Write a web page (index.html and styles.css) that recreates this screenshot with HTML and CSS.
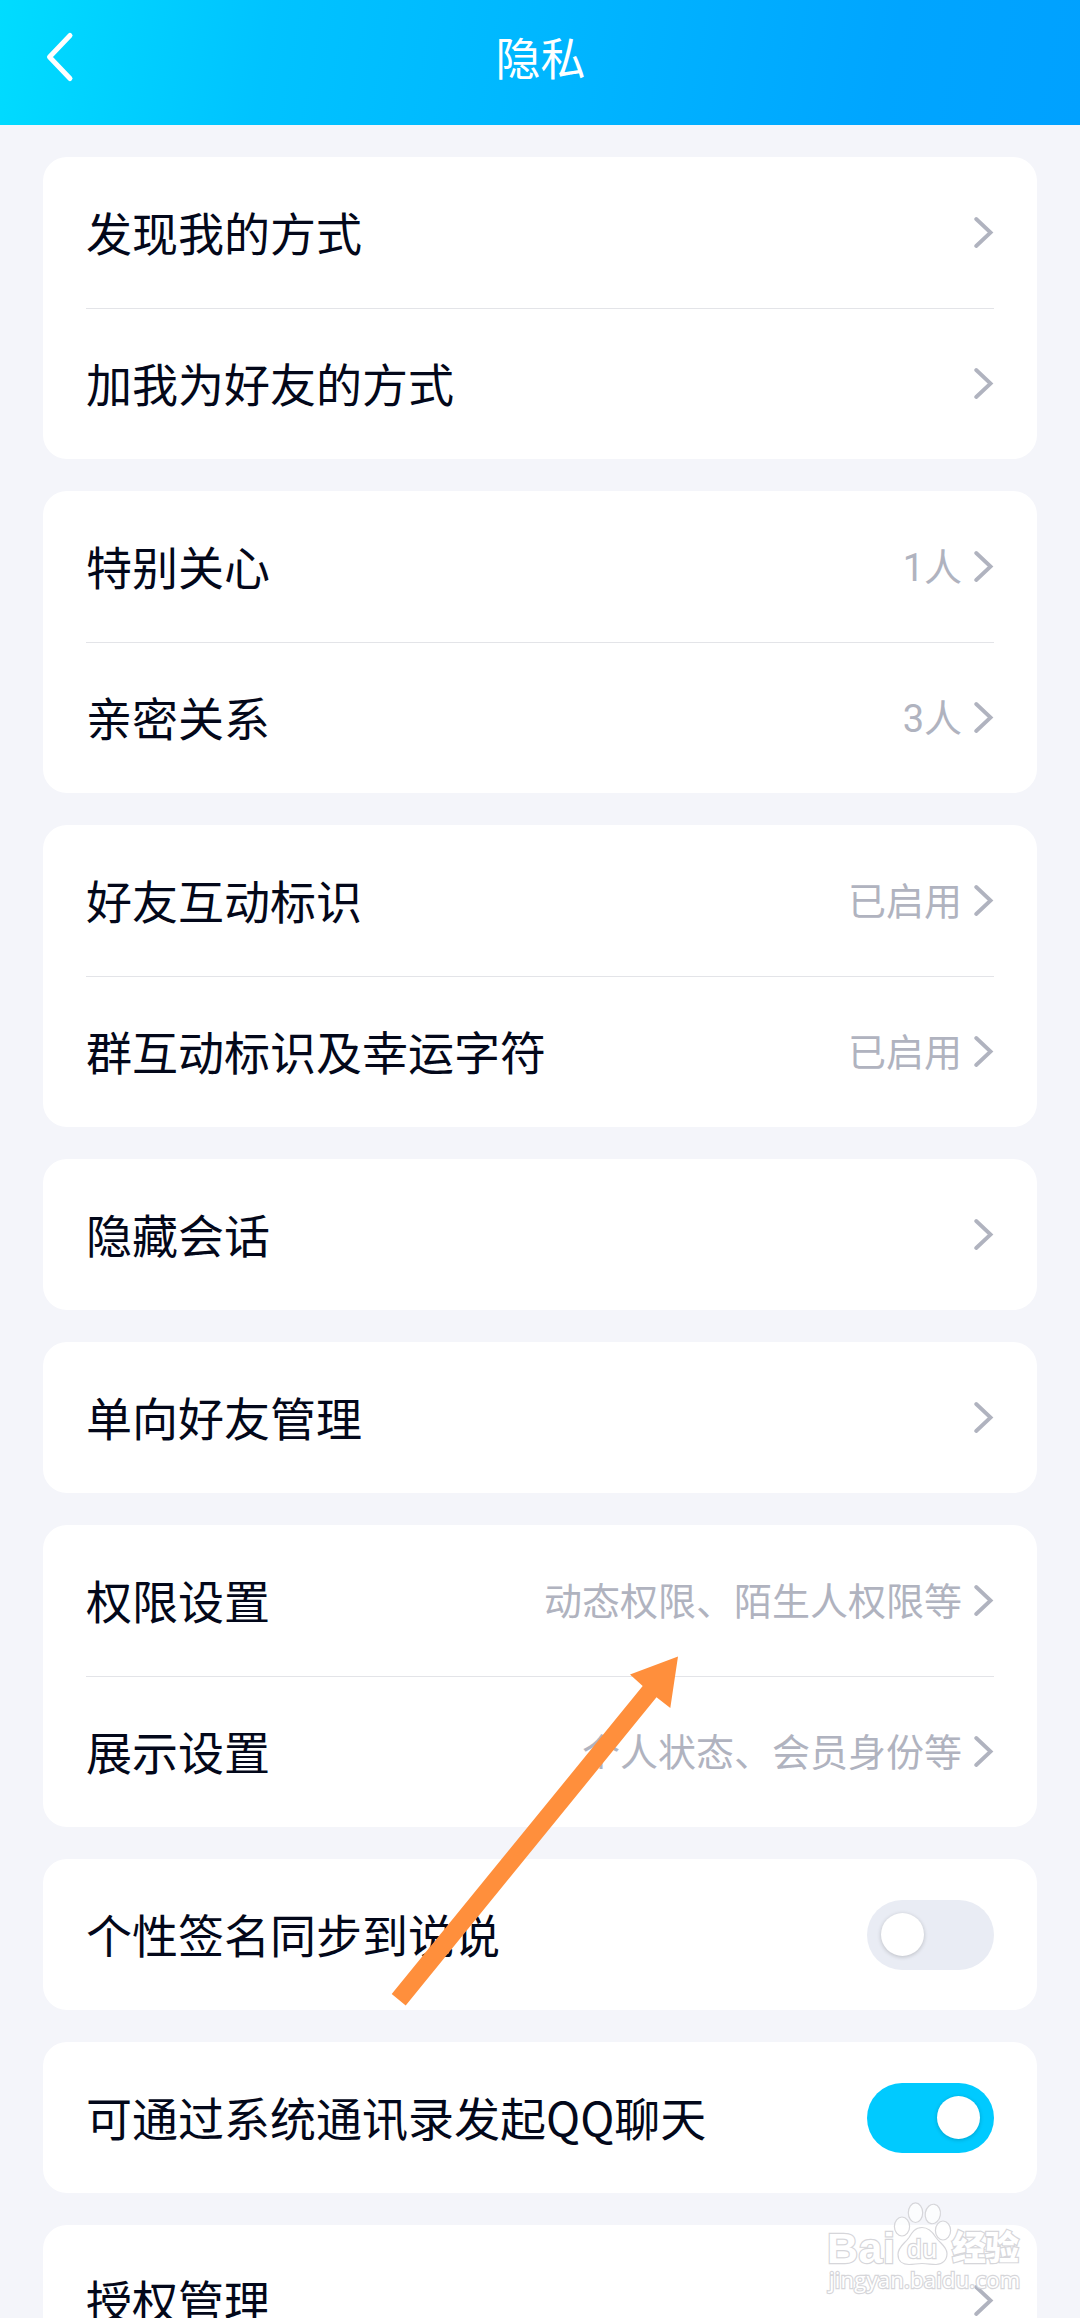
FILE: index.html
```html
<!DOCTYPE html>
<html lang="zh-CN">
<head>
  <meta charset="UTF-8">
  <meta name="viewport" content="width=device-width, initial-scale=1.0">
  <title>隐私</title>
  <link rel="stylesheet" href="styles.css">
</head>
<body>
  <!-- Shared row chevron -->
  <svg class="defs" width="0" height="0">
    <symbol id="chevron" viewBox="0 0 20 34">
      <path d="M2.2 3 L16.6 16.500 L2.2 30" fill="none" stroke="#b0b3bf" stroke-width="3.8" stroke-linecap="round" stroke-linejoin="miter"/>
    </symbol>
  </svg>

  <header class="header">
    <svg class="back" width="32" height="54" viewBox="0 0 32 54">
      <path d="M27 4.500 L6.5 26 L27 47.500" fill="none" stroke="#fff" stroke-width="5" stroke-linecap="round" stroke-linejoin="round"/>
    </svg>
    <h1>隐私</h1>
  </header>

  <main class="list">
    <section class="card">
      <div class="row">
        <span class="label">发现我的方式</span>
        <svg class="arrow"><use href="#chevron"/></svg>
      </div>
      <div class="row">
        <span class="label">加我为好友的方式</span>
        <svg class="arrow"><use href="#chevron"/></svg>
      </div>
    </section>

    <section class="card">
      <div class="row">
        <span class="label">特别关心</span>
        <span class="value">1人</span>
        <svg class="arrow"><use href="#chevron"/></svg>
      </div>
      <div class="row">
        <span class="label">亲密关系</span>
        <span class="value">3人</span>
        <svg class="arrow"><use href="#chevron"/></svg>
      </div>
    </section>

    <section class="card">
      <div class="row">
        <span class="label">好友互动标识</span>
        <span class="value">已启用</span>
        <svg class="arrow"><use href="#chevron"/></svg>
      </div>
      <div class="row">
        <span class="label">群互动标识及幸运字符</span>
        <span class="value">已启用</span>
        <svg class="arrow"><use href="#chevron"/></svg>
      </div>
    </section>

    <section class="card">
      <div class="row">
        <span class="label">隐藏会话</span>
        <svg class="arrow"><use href="#chevron"/></svg>
      </div>
    </section>

    <section class="card">
      <div class="row">
        <span class="label">单向好友管理</span>
        <svg class="arrow"><use href="#chevron"/></svg>
      </div>
    </section>

    <section class="card">
      <div class="row">
        <span class="label">权限设置</span>
        <span class="value">动态权限、陌生人权限等</span>
        <svg class="arrow"><use href="#chevron"/></svg>
      </div>
      <div class="row">
        <span class="label">展示设置</span>
        <span class="value">个人状态、会员身份等</span>
        <svg class="arrow"><use href="#chevron"/></svg>
      </div>
    </section>

    <section class="card">
      <div class="row">
        <span class="label">个性签名同步到说说</span>
        <span class="switch"><i class="knob"></i></span>
      </div>
    </section>

    <section class="card">
      <div class="row">
        <span class="label">可通过系统通讯录发起QQ聊天</span>
        <span class="switch on"><i class="knob"></i></span>
      </div>
    </section>

    <section class="card">
      <div class="row">
        <span class="label">授权管理</span>
        <svg class="arrow"><use href="#chevron"/></svg>
      </div>
    </section>
  </main>

  <!-- Pointer over the permission row -->
  <svg class="pointer" width="300" height="360" viewBox="385 1650 300 360">
    <polygon points="678,1656.500 630,1674.500 642.700,1686 391.700,1994 405.700,2005.500 656.500,1697.300 670.300,1708" fill="#ff8f3c"/>
  </svg>

  <!-- Watermark -->
  <svg class="watermark" width="210" height="106" viewBox="820 2196 210 106">
    <g class="wm-shape">
      <ellipse cx="902" cy="2226.500" rx="7.600" ry="9.500"/>
      <ellipse cx="915.500" cy="2212.700" rx="7.200" ry="9.800"/>
      <ellipse cx="932.800" cy="2214" rx="7.600" ry="9.800" transform="rotate(10 932.800 2214)"/>
      <ellipse cx="943" cy="2230.500" rx="7.600" ry="9.500"/>
      <path d="M922 2227.500 c-7 0 -10 5 -13 10 c-4 6 -11 9 -11 17 c0 7 5 10 11 10 c5 0 8 -1 13 -1 c6 0 9 1 14 1 c6 0 11 -4 11 -11 c0 -7 -7 -10 -11 -16 c-3 -5 -7 -10 -14 -10z"/>
    </g>
    <text class="wm-brand" x="827" y="2262.500" textLength="68">Bai</text>
    <text class="wm-du" x="907" y="2258" textLength="30">du</text>
    <text class="wm-cn" x="952" y="2260" textLength="67">经验</text>
    <text class="wm-url" x="829" y="2288" textLength="191">jingyan.baidu.com</text>
  </svg>
</body>
</html>
```
FILE: styles.css
```css
body {
  margin: 0;
  height: 2318px;
  overflow: hidden;
  position: relative;
  background-color: #f4f5fa;
  font-family: "Noto Sans CJK SC", sans-serif;
  color: #03081a;
}

.defs {
  display: block;
}

.header {
  display: flex;
  align-items: center;
  height: 125px;
  box-sizing: border-box;
  padding: 0 43px 10px;
  background: linear-gradient(100deg, #00dcff 0%, #00c3ff 25%, #00b4ff 55%, #00a5ff 82%, #00a1ff 100%);
  color: #fff;
}

.header h1 {
  flex: 1;
  margin: 0 31px 0 0;
  padding-bottom: 2px;
  text-align: center;
  font-size: 45px;
  font-weight: 400;
  line-height: 66px;
}

.back {
  display: block;
}

.list {
  display: flex;
  flex-direction: column;
  gap: 32px;
  padding: 32px 43px 0;
}

.card {
  background-color: #fff;
  border-radius: 24px;
  padding: 0 43px;
}

.row {
  display: flex;
  align-items: center;
  height: 151px;
}

.row + .row {
  box-shadow: inset 0 1px 0 #e3e4e8;
}

.label {
  flex: 1;
  padding-bottom: 4px;
  font-size: 46px;
  line-height: 68px;
}

.value {
  font-family: Roboto, "Noto Sans CJK SC", sans-serif;
  font-size: 38px;
  line-height: 56px;
  padding-top: 3px;
  color: #b0b3bf;
  margin-right: 12px;
}

.arrow {
  width: 20px;
  height: 34px;
}

.switch {
  display: flex;
  align-items: center;
  width: 127px;
  height: 70px;
  box-sizing: border-box;
  padding: 0 14px;
  border-radius: 35px;
  background-color: #e9ecf4;
}

.switch.on {
  justify-content: flex-end;
  background-color: #00caff;
}

.knob {
  width: 43px;
  height: 43px;
  border-radius: 50%;
  background-color: #fff;
  box-shadow: 0 1px 4px rgba(0, 0, 0, 0.2);
}

.pointer {
  position: absolute;
  left: 385px;
  top: 1650px;
}

.watermark {
  position: absolute;
  left: 820px;
  top: 2196px;
}

.wm-shape,
.watermark text {
  fill: rgba(255, 255, 255, 0.75);
  stroke: #d6d6da;
  stroke-width: 1.2px;
}

.watermark text {
  paint-order: stroke;
  stroke-width: 2.4px;
  fill: #fff;
}

.wm-brand {
  font: bold 43px "Liberation Sans", sans-serif;
}

.wm-du {
  font: 26px "Liberation Sans", sans-serif;
}

.wm-cn {
  font: 900 34px "Noto Sans CJK SC", sans-serif;
}

.wm-url {
  font: 22px "Open Sans", sans-serif;
}
```
